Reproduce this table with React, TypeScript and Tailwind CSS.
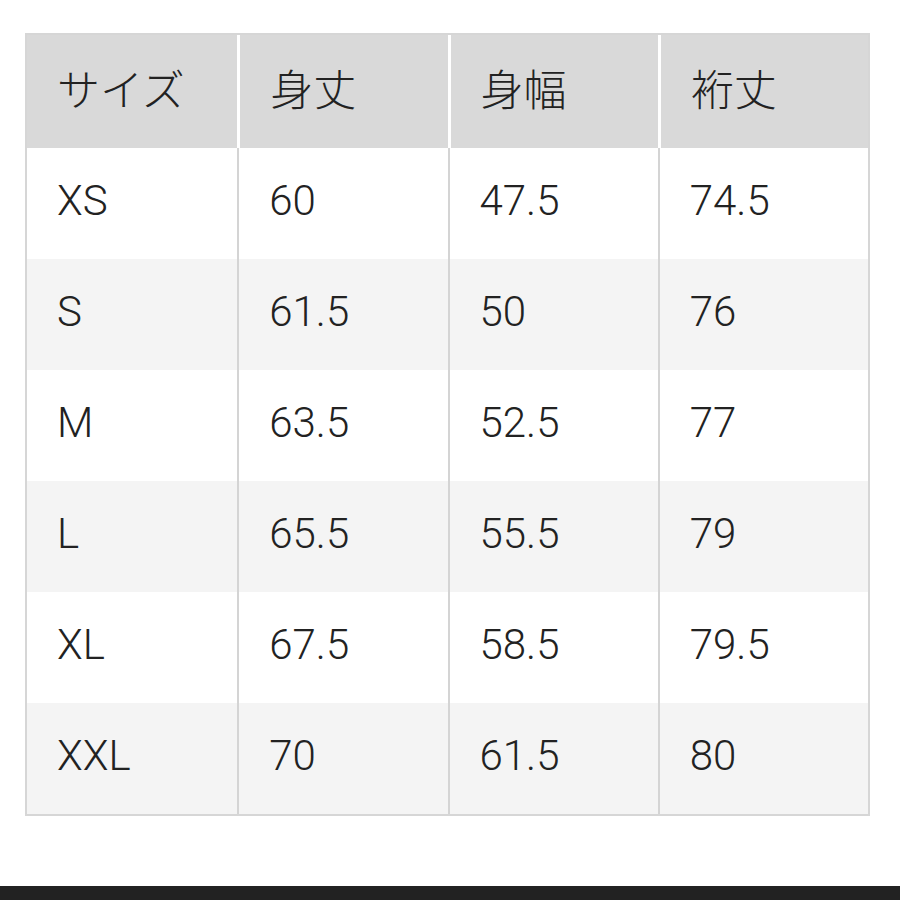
const header = ["サイズ", "身丈", "身幅", "裄丈"];

const rows = [
  ["XS", "60", "47.5", "74.5"],
  ["S", "61.5", "50", "76"],
  ["M", "63.5", "52.5", "77"],
  ["L", "65.5", "55.5", "79"],
  ["XL", "67.5", "58.5", "79.5"],
  ["XXL", "70", "61.5", "80"],
];

export default function App() {
  return (
    <div className="flex h-[900px] w-[900px] flex-col bg-white text-[#222222] [font-family:Roboto,'Noto_Sans_CJK_JP',sans-serif]">
      <div className="ml-[25px] mt-[33px] w-[845px] border-2 border-[#d6d6d6]">
        <div className="grid h-[113px] grid-cols-4">
          {header.map((h, i) => (
            <div
              key={h}
              className={`flex items-center bg-[#d9d9d9] pb-[8px] pl-[30px] text-[43px] font-light [font-family:'Noto_Sans_CJK_JP',sans-serif] ${
                i > 0 ? "border-l-[3px] border-white" : ""
              }`}
            >
              {h}
            </div>
          ))}
        </div>
        {rows.map((r, ri) => (
          <div
            key={r[0]}
            className={`grid h-[111px] grid-cols-4 ${
              ri % 2 === 0 ? "bg-white" : "bg-[#f4f4f4]"
            }`}
          >
            {r.map((c, ci) => (
              <div
                key={ci}
                className={`flex items-center pb-[6px] pl-[30px] text-[42px] font-light ${
                  ci > 0 ? "border-l-2 border-[#d4d4d4]" : ""
                }`}
              >
                {c}
              </div>
            ))}
          </div>
        ))}
      </div>
      <div className="mt-auto h-[14px] bg-[#222222]" />
    </div>
  );
}
